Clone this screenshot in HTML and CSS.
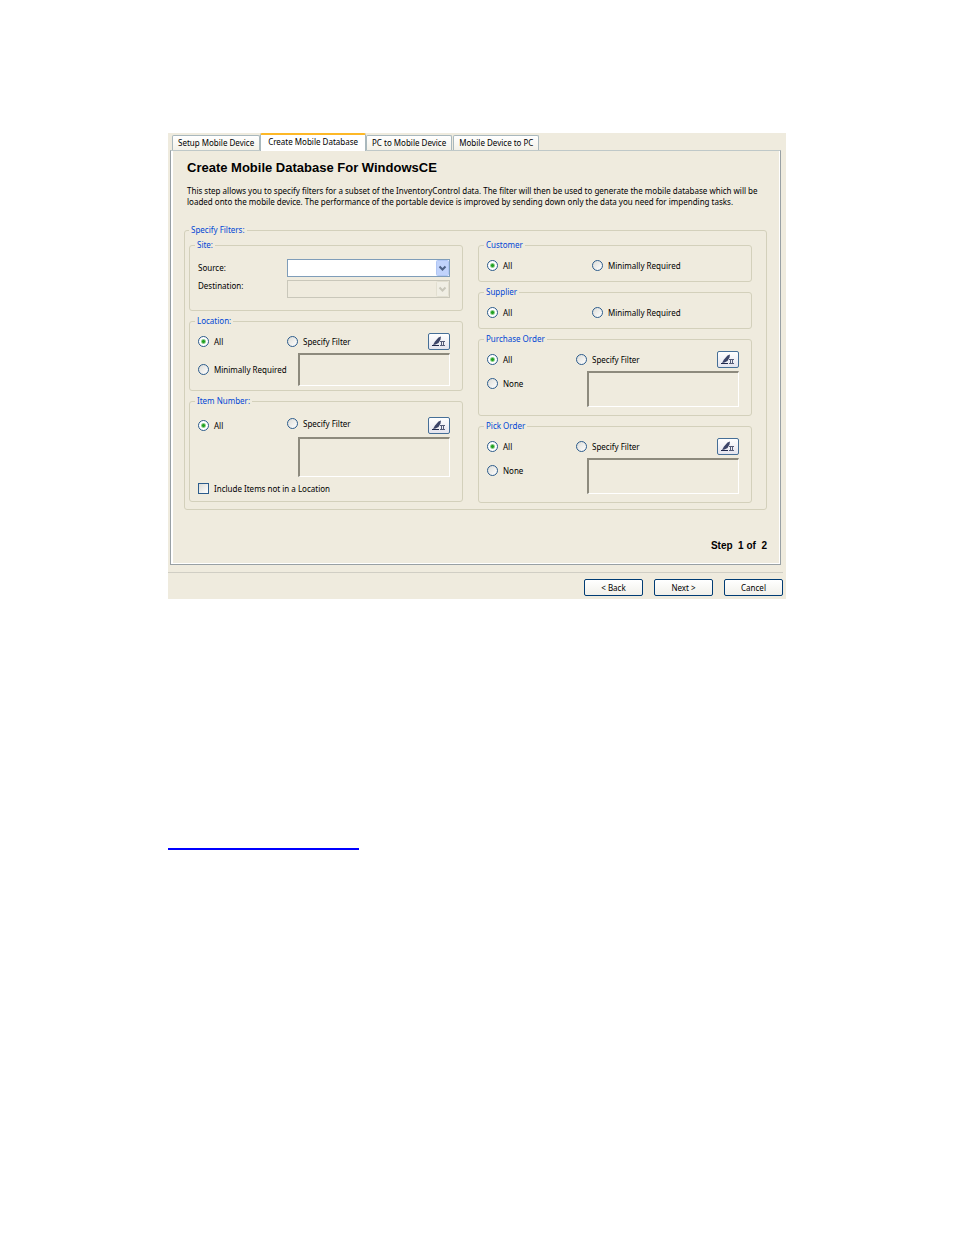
FILE: index.html
```html
<!DOCTYPE html>
<html lang="en">

<head>
    <meta charset="UTF-8">
    <meta name="viewport" content="width=device-width, initial-scale=1.0">
    <title>Create Mobile Database</title>
    <link rel="stylesheet" href="styles.css">
</head>

<body>

    <!-- pen icon shared by the filter buttons -->
    <svg class="sprite" aria-hidden="true">
        <symbol id="pen" viewBox="0 0 14 11">
            <path d="M1 9 L3 5.5 L6.5 1.5 L9 0.5 L8.5 3.5 L6.5 7 L3.5 8.5 Z" fill="#3c4468" />
            <path d="M0 9.5 H7" stroke="#20284c" stroke-width="1" fill="none" />
            <path d="M8 5.5 H13 M8 9.5 H13 M9.5 6 V9 M11.5 6 V9" stroke="#555c78" stroke-width="1" fill="none" />
        </symbol>
    </svg>

    <main>
        <form class="wizard">
            <div class="tabs" role="tablist">
                <button type="button" class="tab" role="tab">Setup Mobile Device</button>
                <button type="button" class="tab active" role="tab" aria-selected="true">Create Mobile Database</button>
                <button type="button" class="tab" role="tab">PC to Mobile Device</button>
                <button type="button" class="tab" role="tab">Mobile Device to PC</button>
            </div>

            <div class="panel">
                <h1>Create Mobile Database For WindowsCE</h1>
                <p class="intro">This step allows you to specify filters for a subset of the InventoryControl data. The filter will then be used to generate the mobile database which will be<br>loaded onto the mobile device. The performance of the portable device is improved by sending down only the data you need for impending tasks.</p>

                <fieldset class="filters">
                    <legend>Specify Filters:</legend>
                    <div class="columns">
                        <div class="column">
                            <fieldset class="site">
                                <legend>Site:</legend>
                                <label for="source">Source:</label>
                                <select id="source"><option></option></select>
                                <label for="destination" class="top">Destination:</label>
                                <select id="destination" disabled><option></option></select>
                            </fieldset>

                            <fieldset class="group">
                                <legend>Location:</legend>
                                <label><input type="radio" name="location" checked> All</label>
                                <label><input type="radio" name="location"> Specify Filter</label>
                                <button type="button" class="edit" aria-label="Edit location filter"><svg><use href="#pen" /></svg></button>
                                <label><input type="radio" name="location"> Minimally Required</label>
                                <textarea class="low" aria-label="Location filter" readonly></textarea>
                            </fieldset>

                            <fieldset class="group item">
                                <legend>Item Number:</legend>
                                <label><input type="radio" name="item" checked> All</label>
                                <label class="top"><input type="radio" name="item"> Specify Filter</label>
                                <button type="button" class="edit" aria-label="Edit item filter"><svg><use href="#pen" /></svg></button>
                                <textarea class="high" aria-label="Item filter" readonly></textarea>
                                <label class="wide"><input type="checkbox"> Include Items not in a Location</label>
                            </fieldset>
                        </div>

                        <div class="column">
                            <fieldset class="pair">
                                <legend>Customer</legend>
                                <label><input type="radio" name="customer" checked> All</label>
                                <label><input type="radio" name="customer"> Minimally Required</label>
                            </fieldset>

                            <fieldset class="pair">
                                <legend>Supplier</legend>
                                <label><input type="radio" name="supplier" checked> All</label>
                                <label><input type="radio" name="supplier"> Minimally Required</label>
                            </fieldset>

                            <fieldset class="group order">
                                <legend>Purchase Order</legend>
                                <label><input type="radio" name="purchase" checked> All</label>
                                <label><input type="radio" name="purchase"> Specify Filter</label>
                                <button type="button" class="edit" aria-label="Edit purchase order filter"><svg><use href="#pen" /></svg></button>
                                <label class="none"><input type="radio" name="purchase"> None</label>
                                <textarea aria-label="Purchase order filter" readonly></textarea>
                            </fieldset>

                            <fieldset class="group order">
                                <legend>Pick Order</legend>
                                <label><input type="radio" name="pick" checked> All</label>
                                <label><input type="radio" name="pick"> Specify Filter</label>
                                <button type="button" class="edit" aria-label="Edit pick order filter"><svg><use href="#pen" /></svg></button>
                                <label class="none"><input type="radio" name="pick"> None</label>
                                <textarea aria-label="Pick order filter" readonly></textarea>
                            </fieldset>
                        </div>
                    </div>
                </fieldset>

                <p class="step">Step &nbsp;1 of &nbsp;2</p>
            </div>

            <div class="buttons">
                <button type="button">&lt; Back</button>
                <button type="button">Next &gt;</button>
                <button type="button">Cancel</button>
            </div>
        </form>

        <a class="page-link" href="#" aria-label="Contents"></a>
    </main>

</body>

</html>
```
FILE: styles.css
```css
* {
    box-sizing: border-box;
}

body {
    margin: 0;
    background: #fff;
    color: #000;
    font: 8px/12px "Noto Sans", "Open Sans", sans-serif;
}

main {
    padding: 133px 168px;
}

button,
select,
textarea {
    font: inherit;
    color: inherit;
    margin: 0;
}

.sprite {
    display: none;
}

.wizard {
    padding-bottom: 3px;
    background: #efebde;
}

/* tabs */
.tabs {
    display: flex;
    align-items: flex-end;
    gap: 1px;
    height: 17px;
    padding-left: 4px;
}

.tab {
    height: 15px;
    padding: 0 5px;
    white-space: nowrap;
    background: linear-gradient(#fff, #f3f1e8);
    border: 1px solid #a9b8bd;
    border-bottom: 0;
    border-radius: 2px 2px 0 0;
}

.tab.active {
    position: relative;
    height: 18px;
    margin: 0 -1px -1px;
    padding: 0 7px 2px;
    background: #fff;
    border-top: 2px solid #fdb827;
}

.panel {
    margin: 0 5px 0 2px;
    padding: 9px 13px 12px;
    border: 1px solid #98a0a4;
    border-top-color: #bfc8c8;
    box-shadow: inset 2px 0 #fff, inset -1px -1px #fff;
}

h1 {
    margin: 0 0 9px 3px;
    font: bold 13px/16px "Liberation Sans", sans-serif;
}

.intro {
    margin: 0 0 17px 3px;
    line-height: 11px;
    white-space: nowrap;
}

/* group boxes */
fieldset {
    min-width: 0;
    margin: 0;
    border: 1px solid #d3d0bb;
    border-radius: 3px;
}

legend {
    height: 12px;
    padding: 0 2px;
    color: #0046d5;
}

.filters {
    padding: 3px 14px 6px 4px;
}

.columns {
    display: grid;
    grid-template-columns: 1fr 1fr;
    gap: 15px;
}

.column {
    display: flex;
    flex-direction: column;
    gap: 4px;
}

.column legend {
    margin-left: -3px;
}

.site {
    display: grid;
    grid-template-columns: 89px 1fr;
    gap: 3px 0;
    padding: 8px 12px 12px 8px;
}

.site label {
    align-self: center;
}

.group {
    display: grid;
    grid-template-columns: 89px 1fr 22px;
    gap: 3px 0;
    align-items: center;
    padding: 6px 12px 4px 8px;
}

.item {
    padding-top: 10px;
    padding-bottom: 6px;
}

.order {
    padding-bottom: 8px;
}

.pair {
    display: grid;
    grid-template-columns: 105px 1fr;
    padding: 8px 12px 9px 8px;
}

.group label,
.pair label {
    display: flex;
    align-items: center;
    gap: 5px;
    height: 13px;
    white-space: nowrap;
}

.site .top,
.group .top {
    align-self: start;
}

.group .none {
    align-self: start;
    margin-top: 6px;
}

.group .wide {
    grid-column: 1 / 4;
    margin-top: 2px;
}

/* controls */
input {
    appearance: none;
    flex: none;
    width: 11px;
    height: 11px;
    margin: 0;
    border: 1px solid #2c5c8c;
    background: linear-gradient(135deg, #dcdcd7, #fff);
}

input[type="radio"] {
    border-radius: 50%;
}

input[type="radio"]:checked {
    background: radial-gradient(circle, #21a121 1px, #fff 3px);
}

select {
    appearance: none;
    width: 100%;
    height: 18px;
    padding: 0 16px 0 3px;
    border: 1px solid #7f9db9;
    border-radius: 0;
    background:
        url("data:image/svg+xml,%3Csvg xmlns='http://www.w3.org/2000/svg' width='13' height='16'%3E%3Crect x='.5' y='.5' width='12' height='15' rx='1' fill='%23c1d3fb' stroke='%23b0c6f4'/%3E%3Cpath d='M3.5 6.5l3 3 3-3' fill='none' stroke='%234d6185' stroke-width='2'/%3E%3C/svg%3E") right center no-repeat #fff;
}

select:disabled {
    opacity: 1;
    border-color: #c9c7ba;
    background:
        url("data:image/svg+xml,%3Csvg xmlns='http://www.w3.org/2000/svg' width='13' height='16'%3E%3Crect x='.5' y='.5' width='12' height='15' rx='1' fill='%23f0eee4' stroke='%23e2dfd0'/%3E%3Cpath d='M3.5 6.5l3 3 3-3' fill='none' stroke='%23c9c7ba' stroke-width='2'/%3E%3C/svg%3E") right center no-repeat #efebde;
}

textarea {
    grid-column: 2 / 4;
    display: block;
    height: 36px;
    margin-left: 11px;
    padding: 1px;
    resize: none;
    border: 1px solid #fff;
    border-top: 2px solid #8d8a7d;
    border-left: 2px solid #8d8a7d;
    background: #efebde;
}

textarea.low {
    height: 33px;
}

textarea.high {
    height: 40px;
}

.edit {
    display: flex;
    align-items: center;
    justify-content: center;
    height: 17px;
    padding: 0;
    border: 1px solid #466f97;
    border-radius: 2px;
    background: linear-gradient(#fff, #e4e4ee);
}

.edit svg {
    width: 14px;
    height: 11px;
}

.step {
    margin: 30px 0 0;
    text-align: right;
    font: bold 10px/12px "Liberation Sans", sans-serif;
}

.buttons {
    display: flex;
    justify-content: flex-end;
    gap: 11px;
    margin: 7px 3px 0 0;
    padding-top: 6px;
    border-top: 1px solid #d0cec4;
}

.buttons button {
    width: 59px;
    height: 17px;
    padding: 0;
    border: 1px solid #003c74;
    border-radius: 2px;
    background: linear-gradient(#fff, #f1f0ea);
}

.page-link {
    display: block;
    width: 191px;
    margin-top: 249px;
    border-bottom: 2px solid #00f;
}
```
